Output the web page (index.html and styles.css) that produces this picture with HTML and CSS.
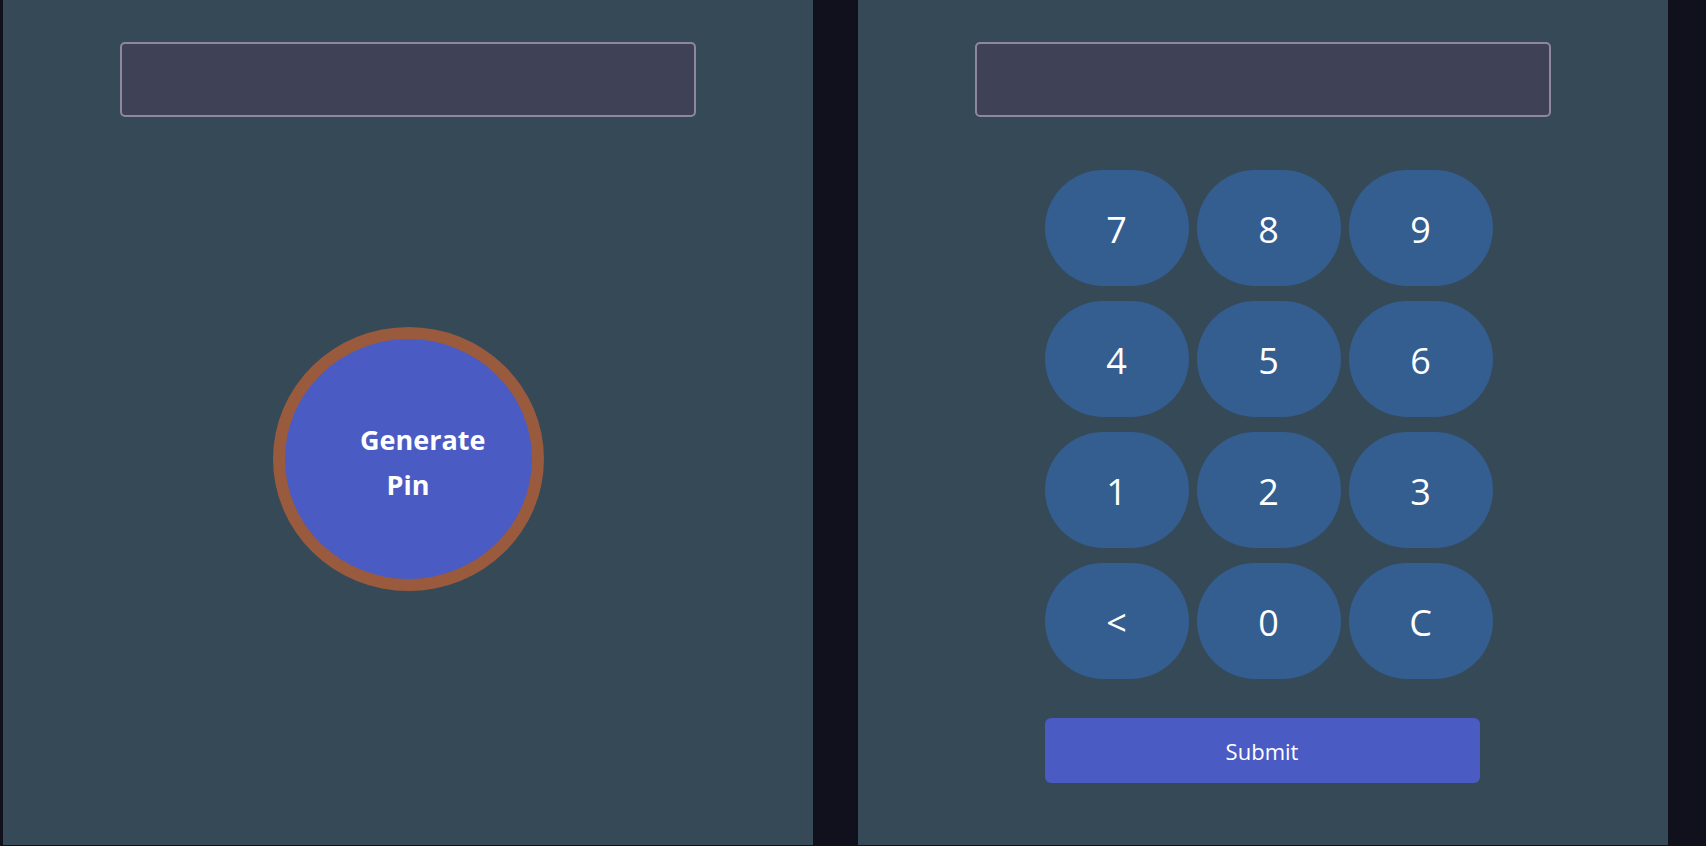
FILE: index.html
```html
<!DOCTYPE html>
<html lang="en">
<head>
<meta charset="utf-8">
<title>Pin Matcher</title>
<link rel="stylesheet" href="styles.css">
</head>
<body>
  <main class="app">
    <section class="panel">
      <input class="display" type="text" aria-label="Generated pin">
      <button class="generate"><span class="generate-label">Generate Pin</span></button>
    </section>
    <section class="panel">
      <input class="display" type="text" aria-label="Typed pin">
      <div class="pad">
        <div class="keys">
          <button class="key">7</button>
          <button class="key">8</button>
          <button class="key">9</button>
          <button class="key">4</button>
          <button class="key">5</button>
          <button class="key">6</button>
          <button class="key">1</button>
          <button class="key">2</button>
          <button class="key">3</button>
          <button class="key">&lt;</button>
          <button class="key">0</button>
          <button class="key">C</button>
        </div>
        <button class="submit">Submit</button>
      </div>
    </section>
  </main>
</body>
</html>
```

FILE: styles.css
```css
html, body {
  margin: 0;
  padding: 0;
  background: #10111c;
  height: 846px;
  overflow: hidden;
}

.app {
  display: flex;
  gap: 45px;
  padding-left: 3px;
  height: 845px;
  font-family: "Open Sans", "Noto Sans", sans-serif;
}

.panel {
  width: 810px;
  height: 845px;
  background: #354957;
  display: flex;
  flex-direction: column;
  align-items: center;
}

.display {
  box-sizing: border-box;
  margin-top: 42px;
  width: 576px;
  height: 75px;
  background: #3f4257;
  border: 2px solid #8d889d;
  border-radius: 5px;
  outline: none;
}

.generate {
  box-sizing: content-box;
  margin-top: 210px;
  width: 247px;
  height: 240px;
  border: 12px solid #9a5a3d;
  border-radius: 50%;
  background: #4a5bc3;
  color: #fff;
  font-family: inherit;
  font-weight: 700;
  font-size: 27px;
  line-height: 45px;
  display: flex;
  align-items: center;
  justify-content: center;
  padding: 0;
}

.generate-label {
  display: block;
  width: 96px;
  text-align: center;
  margin-top: 6px;
}

.pad {
  width: 437px;
  margin-top: 53px;
}

.keys {
  display: grid;
  grid-template-columns: repeat(3, 144px);
  grid-auto-rows: 116px;
  column-gap: 8px;
  row-gap: 15px;
}

.key {
  border: none;
  border-radius: 58px;
  background: #345d90;
  color: #fff;
  font-family: inherit;
  font-size: 36px;
  padding: 3px 0 0 0;
  line-height: 1;
}

.submit {
  display: block;
  width: 435px;
  height: 65px;
  margin-top: 39px;
  border: none;
  border-radius: 6px;
  background: #4a5bc3;
  color: #fff;
  font-family: inherit;
  font-size: 22px;
}
```
